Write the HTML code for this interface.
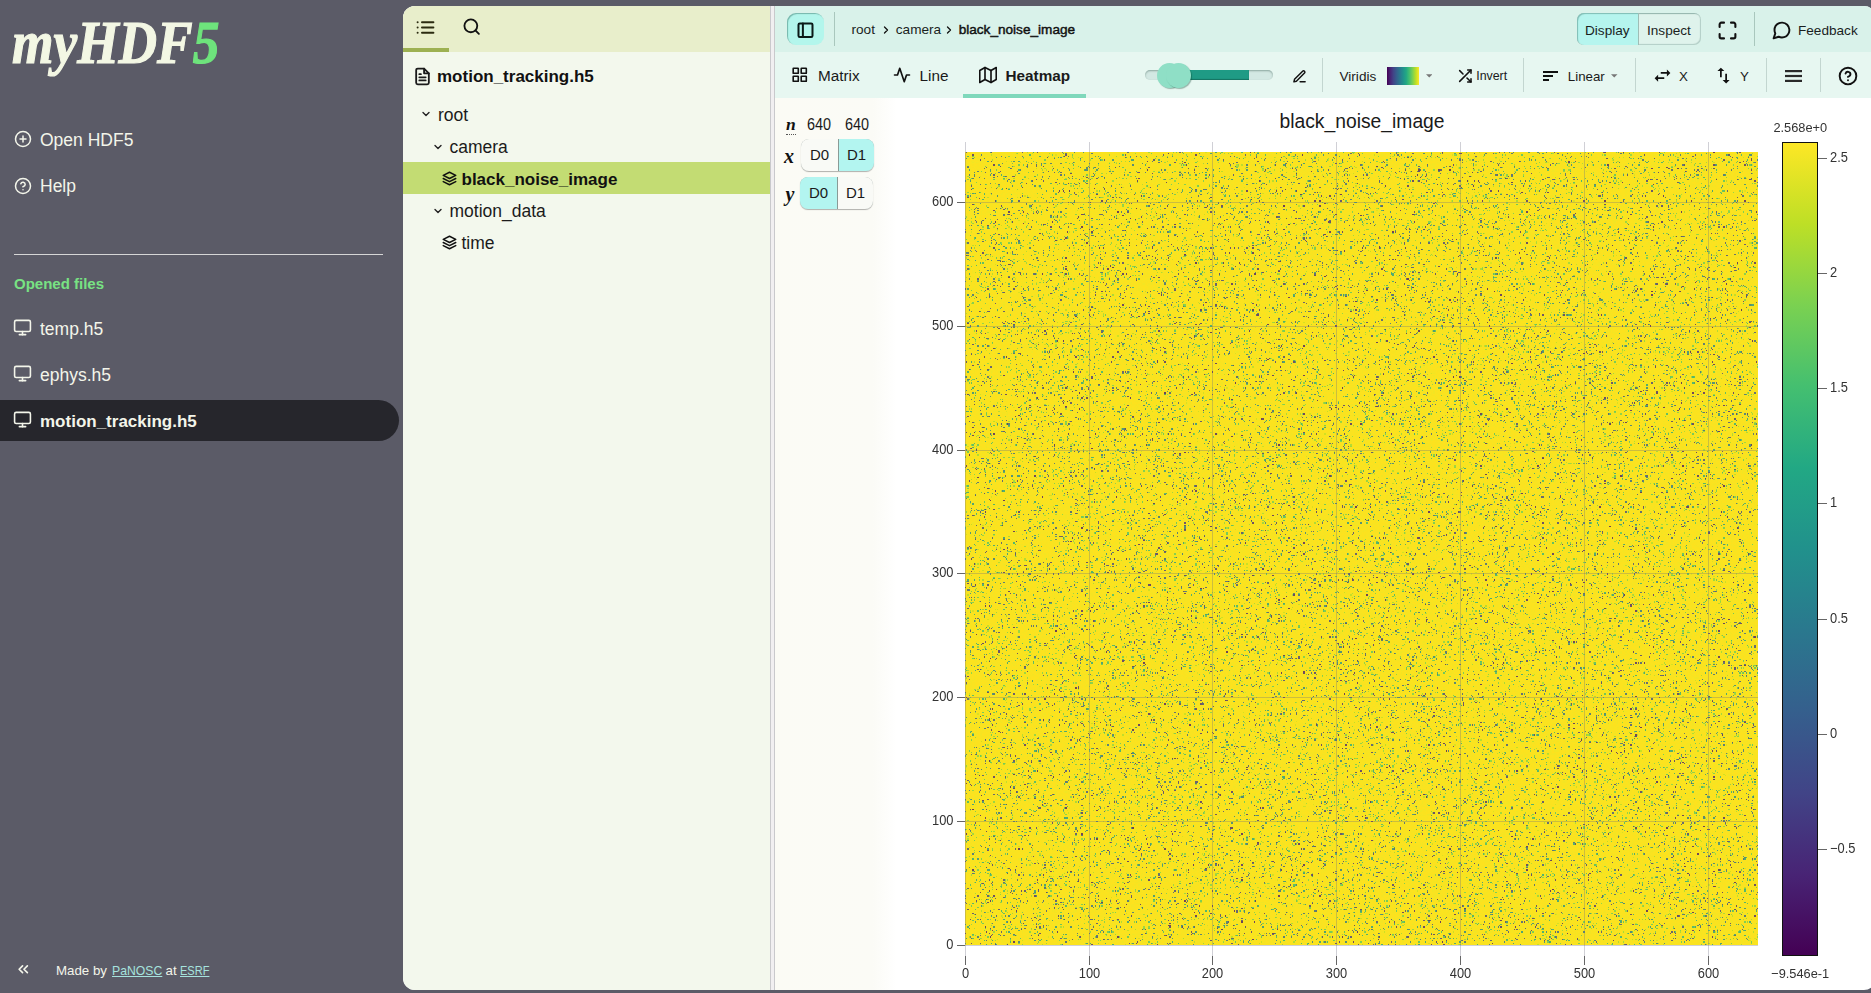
<!DOCTYPE html>
<html><head><meta charset="utf-8">
<style>
*{box-sizing:border-box;margin:0;padding:0}
html,body{width:1871px;height:993px;overflow:hidden}
body{background:#5b5b67;font-family:"Liberation Sans",sans-serif;position:relative;color:#1b1b1b}
.a{position:absolute;white-space:nowrap;line-height:1}
svg.a{display:block}
.fi{fill:none;stroke:currentColor;stroke-width:2;stroke-linecap:round;stroke-linejoin:round}
.mi{fill:currentColor}
.b{font-weight:bold}
/* sidebar */
#logo{left:12px;top:11px;font-family:"Liberation Serif",serif;font-weight:bold;font-style:italic;font-size:62px;color:#f3f7e4;letter-spacing:0px;transform-origin:0 0;transform:scaleX(0.86);-webkit-text-stroke:1.2px #f3f7e4}
#logo span{-webkit-text-stroke:1.2px #6ee37c}
#logo span{color:#6ee37c}
.side{color:#f3f5ea;font-size:17.5px}
#sep{left:14px;top:254px;width:369px;height:1px;background:#d6d6d6}
#opened{left:14px;top:276px;font-size:15px;font-weight:bold;color:#78e283}
#pill{left:0;top:400px;width:399px;height:41px;background:#26262c;border-radius:0 21px 21px 0}
.foot{font-size:13.3px;color:#f3f5ea;transform-origin:0 0}
.lk{color:#a6e3de;text-decoration:underline;text-underline-offset:1px}
/* panel backgrounds */
#panel{left:403px;top:6px;width:1473px;height:984px;background:#fff;border-radius:12px;overflow:hidden}
#tree{left:0;top:0;width:367px;height:984px;background:#f3f8ed}
#treehead{left:0;top:0;width:367px;height:46px;background:#e8eecb}
#tabline{left:0;top:42px;width:46px;height:4px;background:#9db152}
#selrow{left:0;top:156px;width:367px;height:32px;background:#c3dc73}
#splitter{left:367px;top:0;width:5px;height:984px;background:#f1eff1;border-left:1px solid #c9c9cc;border-right:1px solid #c9c9cc}
#bar{left:372px;top:0;width:1108px;height:46px;background:#d9f2ea}
#tool{left:372px;top:46px;width:1108px;height:46px;background:#e7f7f1}
#dims{left:372px;top:92px;width:122px;height:892px;background:linear-gradient(to right,#fbfbf5 0,#fbfbf6 98px,#fff 122px)}
.tt{font-size:17.5px;color:#1b1b1b}
.tb{font-size:17px;font-weight:bold;color:#111}
.bc{font-size:13.6px;color:#1a1f1e}
.tl{font-size:15.3px;color:#1a1a1a}
.sepv{top:58px;width:1px;height:34px;background:#c3d6d0}
.sm{color:#1a1a1a}
.dm{font-size:16px;color:#1a1a1a;transform-origin:0 0;transform:scaleX(.9)}
.grp{display:flex;height:32px;border-radius:8px;overflow:hidden;box-shadow:inset 0 0 0 1px #a4aeab, 0 1px 1px rgba(0,0,0,.3)}
.seg{height:32px;line-height:32px;text-align:center;font-size:15px;color:#1a1a1a;background:#f9faf6}
.seg.on{background:#b3f5f0}
.seg+.seg{border-left:1px solid #8a9a96}
.chev{color:#222;stroke-width:2.8}
</style></head><body>

<!-- SIDEBAR -->
<div id="logo" class="a">myHDF<span>5</span></div>

<svg class="a fi" style="left:14px;top:130.2px;color:#f3f5ea" width="18" height="18" viewBox="0 0 24 24"><circle cx="12" cy="12" r="10"/><line x1="12" y1="8" x2="12" y2="16"/><line x1="8" y1="12" x2="16" y2="12"/></svg>
<div class="a side" style="left:40px;top:131.5px">Open HDF5</div>
<svg class="a fi" style="left:14px;top:176.5px;color:#f3f5ea" width="18" height="18" viewBox="0 0 24 24"><circle cx="12" cy="12" r="10"/><path d="M9.09 9a3 3 0 0 1 5.83 1c0 2-3 3-3 3"/><line x1="12" y1="17" x2="12.01" y2="17"/></svg>
<div class="a side" style="left:40px;top:178px">Help</div>

<div id="sep" class="a"></div>
<div id="opened" class="a">Opened files</div>

<div id="pill" class="a"></div>
<svg class="a fi" style="left:13px;top:318px;color:#f3f5ea" width="19" height="19" viewBox="0 0 24 24"><rect x="2" y="3" width="20" height="14" rx="2" ry="2"/><line x1="8" y1="21" x2="16" y2="21"/><line x1="12" y1="17" x2="12" y2="21"/></svg>
<div class="a side" style="left:40px;top:321px">temp.h5</div>
<svg class="a fi" style="left:13px;top:364px;color:#f3f5ea" width="19" height="19" viewBox="0 0 24 24"><rect x="2" y="3" width="20" height="14" rx="2" ry="2"/><line x1="8" y1="21" x2="16" y2="21"/><line x1="12" y1="17" x2="12" y2="21"/></svg>
<div class="a side" style="left:40px;top:367px">ephys.h5</div>
<svg class="a fi" style="left:13px;top:410px;color:#f3f5ea" width="19" height="19" viewBox="0 0 24 24"><rect x="2" y="3" width="20" height="14" rx="2" ry="2"/><line x1="8" y1="21" x2="16" y2="21"/><line x1="12" y1="17" x2="12" y2="21"/></svg>
<div class="a side b" style="left:40px;top:412.5px;font-size:17px">motion_tracking.h5</div>

<svg class="a fi" style="left:14.5px;top:961px;color:#f3f5ea;stroke-width:2.4" width="16.5" height="16.5" viewBox="0 0 24 24"><polyline points="11 17 6 12 11 7"/><polyline points="18 17 13 12 18 7"/></svg>
<div class="a foot" style="left:56px;top:964px">Made by</div>
<div class="a foot lk" style="left:112px;top:964px;transform:scaleX(.92)">PaNOSC</div>
<div class="a foot" style="left:165.5px;top:964px">at</div>
<div class="a foot lk" style="left:179.8px;top:964px;transform:scaleX(.83)">ESRF</div>

<!-- MAIN PANEL BACKGROUNDS -->
<div id="panel" class="a">
 <div id="tree" class="a"></div>
 <div id="treehead" class="a"></div>
 <div id="tabline" class="a"></div>
 <div id="selrow" class="a"></div>
 <div id="splitter" class="a"></div>
 <div id="bar" class="a"></div>
 <div id="tool" class="a"></div>
 <div id="dims" class="a"></div>
</div>

<!-- TREE -->
<svg class="a fi" style="left:415px;top:16.5px;color:#2b2b10;stroke-width:2.3" width="21" height="21" viewBox="0 0 24 24"><line x1="8" y1="6" x2="21" y2="6"/><line x1="8" y1="12" x2="21" y2="12"/><line x1="8" y1="18" x2="21" y2="18"/><line x1="3" y1="6" x2="3.01" y2="6"/><line x1="3" y1="12" x2="3.01" y2="12"/><line x1="3" y1="18" x2="3.01" y2="18"/></svg>
<svg class="a fi" style="left:462.2px;top:17.3px;color:#111;stroke-width:2.3" width="19.3" height="19.3" viewBox="0 0 24 24"><circle cx="11" cy="11" r="8"/><line x1="21" y1="21" x2="16.65" y2="16.65"/></svg>

<svg class="a fi" style="left:413px;top:66.5px;color:#1a1a1a;stroke-width:2.3" width="19" height="19" viewBox="0 0 24 24"><path d="M14 2H6a2 2 0 0 0-2 2v16a2 2 0 0 0 2 2h12a2 2 0 0 0 2-2V8z"/><polyline points="14 2 14 8 20 8"/><line x1="16" y1="13" x2="8" y2="13"/><line x1="16" y1="17" x2="8" y2="17"/><polyline points="10 9 9 9 8 9"/></svg>
<div class="a tb" style="left:437px;top:68px">motion_tracking.h5</div>

<svg class="a fi chev" style="left:420px;top:108px" width="12" height="12" viewBox="0 0 24 24"><polyline points="6 9 12 15 18 9"/></svg>
<div class="a tt" style="left:438px;top:107px">root</div>
<svg class="a fi chev" style="left:432px;top:141px" width="12" height="12" viewBox="0 0 24 24"><polyline points="6 9 12 15 18 9"/></svg>
<div class="a tt" style="left:449.5px;top:139px">camera</div>
<svg class="a fi" style="left:442.3px;top:171px;color:#111;stroke-width:2.4" width="15" height="15" viewBox="0 0 24 24"><polygon points="12 2 2 7 12 12 22 7 12 2"/><polyline points="2 17 12 22 22 17"/><polyline points="2 12 12 17 22 12"/></svg>
<div class="a tb" style="left:461.5px;top:171px">black_noise_image</div>
<svg class="a fi chev" style="left:432px;top:205px" width="12" height="12" viewBox="0 0 24 24"><polyline points="6 9 12 15 18 9"/></svg>
<div class="a tt" style="left:449.5px;top:203px">motion_data</div>
<svg class="a fi" style="left:442.3px;top:235px;color:#111;stroke-width:2.4" width="15" height="15" viewBox="0 0 24 24"><polygon points="12 2 2 7 12 12 22 7 12 2"/><polyline points="2 17 12 22 22 17"/><polyline points="2 12 12 17 22 12"/></svg>
<div class="a tt" style="left:461.5px;top:235px">time</div>

<!--VIS-->
<!-- header bar -->
<div class="a" style="left:787px;top:13px;width:37px;height:32px;border-radius:9px;background:#b3f6ec;box-shadow:inset 1px 1px 1px rgba(0,60,50,.35)"></div>
<svg class="a fi" style="left:794.8px;top:19.5px;color:#0b1a18;stroke-width:2.3" width="21" height="21" viewBox="0 0 24 24"><rect x="4" y="4" width="16" height="15.5" rx="1.5" ry="1.5"/><line x1="9" y1="4" x2="9" y2="19.5"/></svg>
<div class="a" style="left:834px;top:12px;width:1px;height:34px;background:#a9c7bd"></div>
<div class="a bc" style="left:851.5px;top:22.5px">root</div>
<svg class="a fi" style="left:880px;top:23.5px;color:#111;stroke-width:2.6" width="12" height="12" viewBox="0 0 24 24"><polyline points="9 18 15 12 9 6"/></svg>
<div class="a bc" style="left:895.8px;top:22.5px">camera</div>
<svg class="a fi" style="left:943px;top:23.5px;color:#111;stroke-width:2.6" width="12" height="12" viewBox="0 0 24 24"><polyline points="9 18 15 12 9 6"/></svg>
<div class="a bc" style="left:958.7px;top:22.6px;color:#111;-webkit-text-stroke:0.45px #111">black_noise_image</div>

<div class="a" style="left:1577px;top:13px;width:124px;height:32px;border-radius:7px;background:#dff3ec;box-shadow:inset 1px 1px 1px rgba(0,60,50,.35),inset -1px -1px 1px rgba(0,60,50,.2)"></div>
<div class="a" style="left:1577px;top:13px;width:62px;height:32px;border-radius:7px 0 0 7px;background:#b5f5ee;box-shadow:inset 1px 1px 1px rgba(0,60,50,.3)"></div>
<div class="a" style="left:1638px;top:13px;width:1px;height:32px;background:#9fbdb5"></div>
<div class="a bc" style="left:1585px;top:24px">Display</div>
<div class="a bc" style="left:1647px;top:24px">Inspect</div>
<svg class="a fi" style="left:1717px;top:20px;color:#111;stroke-width:2.4" width="21" height="21" viewBox="0 0 24 24"><path d="M8 3H5a2 2 0 0 0-2 2v3m18 0V5a2 2 0 0 0-2-2h-3m0 18h3a2 2 0 0 0 2-2v-3M3 16v3a2 2 0 0 0 2 2h3"/></svg>
<div class="a" style="left:1754px;top:12px;width:1px;height:34px;background:#a9c7bd"></div>
<svg class="a fi" style="left:1771px;top:20px;color:#111;stroke-width:2.2" width="21" height="21" viewBox="0 0 24 24"><path d="M21 11.5a8.38 8.38 0 0 1-.9 3.8 8.5 8.5 0 0 1-7.6 4.7 8.38 8.38 0 0 1-3.8-.9L3 21l1.9-5.7a8.38 8.38 0 0 1-.9-3.8 8.5 8.5 0 0 1 4.7-7.6 8.38 8.38 0 0 1 3.8-.9h.5a8.48 8.48 0 0 1 8 8v.5z"/></svg>
<div class="a bc" style="left:1798px;top:24px">Feedback</div>

<!-- toolbar -->
<svg class="a fi" style="left:790.9px;top:66.1px;color:#111;stroke-width:2.2" width="17.5" height="17.5" viewBox="0 0 24 24"><rect x="3" y="3" width="7" height="7" rx=".5"/><rect x="14" y="3" width="7" height="7" rx=".5"/><rect x="14" y="14" width="7" height="7" rx=".5"/><rect x="3" y="14" width="7" height="7" rx=".5"/></svg>
<div class="a tl" style="left:818px;top:68px">Matrix</div>
<svg class="a fi" style="left:893px;top:66px;color:#111;stroke-width:2.2" width="18" height="18" viewBox="0 0 24 24"><polyline points="22 12 18 12 15 21 9 3 6 12 2 12"/></svg>
<div class="a tl" style="left:919.5px;top:68px">Line</div>
<svg class="a fi" style="left:979px;top:65.6px;color:#111;stroke-width:2.2" width="18" height="18" viewBox="0 0 24 24"><polygon points="1 6 1 22 8 18 16 22 23 18 23 2 16 6 8 2 1 6"/><line x1="8" y1="2" x2="8" y2="18"/><line x1="16" y1="6" x2="16" y2="22"/></svg>
<div class="a tl b" style="left:1005.5px;top:68px">Heatmap</div>
<div class="a" style="left:963px;top:94px;width:123px;height:4px;background:#7fd8bb"></div>


<!-- toolbar right -->
<div class="a" style="left:1145px;top:70px;width:128px;height:10px;border-radius:5px;background:#d3e8e3;box-shadow:inset 0 1px 2px rgba(0,40,30,.35)"></div>
<div class="a" style="left:1170px;top:70px;width:79px;height:10px;background:#1f9b85;box-shadow:inset 0 -1px 1px rgba(0,40,30,.35)"></div>
<div class="a" style="left:1157px;top:63px;width:25px;height:25px;border-radius:50%;background:#8fdfc6;box-shadow:1px 1px 1px rgba(0,60,40,.35)"></div>
<div class="a" style="left:1166px;top:63px;width:25px;height:25px;border-radius:50%;background:#8fdfc6;box-shadow:1px 1px 1px rgba(0,60,40,.35)"></div>
<svg class="a fi" style="left:1291.8px;top:68.5px;color:#111;stroke-width:2.3" width="15" height="15" viewBox="0 0 24 24"><path d="M13 20.5h8"/><path d="M17 3.5a2.121 2.121 0 0 1 3 3L7 19.5l-4 1 1-4L17 3.5z"/></svg>
<div class="a sepv" style="left:1322px"></div>
<div class="a sm" style="left:1339.5px;top:69.5px;font-size:13.6px">Viridis</div>
<div class="a" style="left:1387px;top:67px;width:32px;height:18px;background:linear-gradient(to right,#440154 0%,#482475 10%,#414487 20%,#355f8d 30%,#2a788e 40%,#21918c 50%,#22a884 60%,#44bf70 70%,#7ad151 80%,#bddf26 90%,#fde725 100%)"></div>
<svg class="a" style="left:1425.5px;top:74.3px" width="6.5" height="3.5" viewBox="0 0 8 4"><polygon points="0,0 8,0 4,4" fill="#777"/></svg>
<svg class="a fi" style="left:1456.5px;top:67.5px;color:#111;stroke-width:2.3" width="16" height="16" viewBox="0 0 24 24"><polyline points="16 3 21 3 21 8"/><line x1="4" y1="20" x2="21" y2="3"/><polyline points="21 16 21 21 16 21"/><line x1="15" y1="15" x2="21" y2="21"/><line x1="4" y1="4" x2="9" y2="9"/></svg>
<div class="a sm" style="left:1476.2px;top:70px;font-size:12.4px">Invert</div>
<div class="a sepv" style="left:1523px"></div>
<svg class="a" style="left:1543px;top:71px;color:#111" width="16" height="10" viewBox="0 0 16 10"><rect x="0" y="0" width="15" height="2" fill="#111"/><rect x="0" y="4" width="10" height="2" fill="#111"/><rect x="0" y="8" width="6" height="2" fill="#111"/></svg>
<div class="a sm" style="left:1567.8px;top:69.5px;font-size:13.3px">Linear</div>
<svg class="a" style="left:1611.3px;top:74.3px" width="6.5" height="3.5" viewBox="0 0 8 4"><polygon points="0,0 8,0 4,4" fill="#777"/></svg>
<div class="a sepv" style="left:1635px"></div>
<svg class="a mi" style="left:1652px;top:65px;color:#111" width="21" height="21" viewBox="0 0 24 24"><path d="M6.99 11L3 15l3.99 4v-3H14v-2H6.99v-3zM21 9l-3.99-4v3H10v2h7.01v3L21 9z"/></svg>
<div class="a sm" style="left:1679px;top:69.5px;font-size:13.3px">X</div>
<svg class="a mi" style="left:1713px;top:65px;color:#111" width="21" height="21" viewBox="0 0 24 24"><path d="M16 17.01V10h-2v7.01h-3L15 21l4-3.99h-3zM9 3L5 6.99h3V14h2V6.99h3L9 3z"/></svg>
<div class="a sm" style="left:1740px;top:69.5px;font-size:13.3px">Y</div>
<div class="a sepv" style="left:1766px"></div>
<svg class="a" style="left:1785px;top:70px" width="17" height="12" viewBox="0 0 17 12"><rect x="0" y="0" width="17" height="2.2" fill="#2a2a2a"/><rect x="0" y="4.9" width="17" height="2.2" fill="#2a2a2a"/><rect x="0" y="9.8" width="17" height="2.2" fill="#2a2a2a"/></svg>
<div class="a sepv" style="left:1820px"></div>
<svg class="a fi" style="left:1837.6px;top:65.9px;color:#111;stroke-width:2.3" width="20" height="20" viewBox="0 0 24 24"><circle cx="12" cy="12" r="10"/><path d="M9.09 9a3 3 0 0 1 5.83 1c0 2-3 3-3 3"/><line x1="12" y1="17" x2="12.01" y2="17"/></svg>

<!-- dimension mapper -->
<div class="a" style="left:786px;top:116px;font-family:'Liberation Serif',serif;font-style:italic;font-weight:bold;font-size:17.5px;color:#111">n</div>
<div class="a" style="left:786px;top:134px;width:10px;border-top:1px dotted #555"></div>
<div class="a dm" style="left:807px;top:116.5px">640</div>
<div class="a dm" style="left:844.5px;top:116.5px">640</div>
<div class="a" style="left:784px;top:146px;font-family:'Liberation Serif',serif;font-style:italic;font-weight:bold;font-size:20px;color:#111">x</div>
<div class="a grp" style="left:801px;top:139px"><div class="seg" style="width:37px">D0</div><div class="seg on" style="width:36px">D1</div></div>
<div class="a" style="left:785.5px;top:184px;font-family:'Liberation Serif',serif;font-style:italic;font-weight:bold;font-size:20px;color:#111">y</div>
<div class="a grp" style="left:800px;top:177px"><div class="seg on" style="width:37px">D0</div><div class="seg" style="width:36px">D1</div></div>

<!-- heatmap -->
<div class="a" style="left:1279.5px;top:111.5px;font-size:19.3px;color:#1a1a1a">black_noise_image</div>
<canvas id="hm" class="a" width="640" height="640" style="left:965px;top:152px;width:793px;height:793px;image-rendering:pixelated;background:#ecdc27"></canvas>
<svg class="a" style="left:0;top:0;pointer-events:none" width="1871" height="993">
 <g stroke="#6e6e80" stroke-opacity=".32" stroke-width="1">
  <line x1="965.5" y1="142" x2="965.5" y2="956"/>
  <line x1="1089.5" y1="142" x2="1089.5" y2="956"/>
  <line x1="1212.5" y1="142" x2="1212.5" y2="956"/>
  <line x1="1336.5" y1="142" x2="1336.5" y2="956"/>
  <line x1="1460.5" y1="142" x2="1460.5" y2="956"/>
  <line x1="1584.5" y1="142" x2="1584.5" y2="956"/>
  <line x1="1708.5" y1="142" x2="1708.5" y2="956"/>
  <line x1="965" y1="945.5" x2="1758" y2="945.5"/>
  <line x1="965" y1="821.5" x2="1758" y2="821.5"/>
  <line x1="965" y1="697.5" x2="1758" y2="697.5"/>
  <line x1="965" y1="573.5" x2="1758" y2="573.5"/>
  <line x1="965" y1="450.5" x2="1758" y2="450.5"/>
  <line x1="965" y1="326.5" x2="1758" y2="326.5"/>
  <line x1="965" y1="202.5" x2="1758" y2="202.5"/>
 </g>
 <g stroke="#666" stroke-width="1">
  <line x1="965.5" y1="956" x2="965.5" y2="965"/>
  <line x1="1089.5" y1="956" x2="1089.5" y2="965"/>
  <line x1="1212.5" y1="956" x2="1212.5" y2="965"/>
  <line x1="1336.5" y1="956" x2="1336.5" y2="965"/>
  <line x1="1460.5" y1="956" x2="1460.5" y2="965"/>
  <line x1="1584.5" y1="956" x2="1584.5" y2="965"/>
  <line x1="1708.5" y1="956" x2="1708.5" y2="965"/>
  <line x1="957" y1="945.5" x2="965" y2="945.5"/>
  <line x1="957" y1="821.5" x2="965" y2="821.5"/>
  <line x1="957" y1="697.5" x2="965" y2="697.5"/>
  <line x1="957" y1="573.5" x2="965" y2="573.5"/>
  <line x1="957" y1="450.5" x2="965" y2="450.5"/>
  <line x1="957" y1="326.5" x2="965" y2="326.5"/>
  <line x1="957" y1="202.5" x2="965" y2="202.5"/>
  <line x1="1818" y1="158.5" x2="1827" y2="158.5"/>
  <line x1="1818" y1="273.5" x2="1827" y2="273.5"/>
  <line x1="1818" y1="388.5" x2="1827" y2="388.5"/>
  <line x1="1818" y1="503.5" x2="1827" y2="503.5"/>
  <line x1="1818" y1="619.5" x2="1827" y2="619.5"/>
  <line x1="1818" y1="734.5" x2="1827" y2="734.5"/>
  <line x1="1818" y1="849.5" x2="1827" y2="849.5"/>
 </g>
 <g font-family="Liberation Sans" font-size="14" fill="#333">
  <text text-anchor="middle" transform="translate(965.5 978) scale(0.92 1)">0</text>
  <text text-anchor="middle" transform="translate(1089.5 978) scale(0.92 1)">100</text>
  <text text-anchor="middle" transform="translate(1212.5 978) scale(0.92 1)">200</text>
  <text text-anchor="middle" transform="translate(1336.5 978) scale(0.92 1)">300</text>
  <text text-anchor="middle" transform="translate(1460.5 978) scale(0.92 1)">400</text>
  <text text-anchor="middle" transform="translate(1584.5 978) scale(0.92 1)">500</text>
  <text text-anchor="middle" transform="translate(1708.5 978) scale(0.92 1)">600</text>
  <text text-anchor="end" transform="translate(953.5 949) scale(0.92 1)">0</text>
  <text text-anchor="end" transform="translate(953.5 825) scale(0.92 1)">100</text>
  <text text-anchor="end" transform="translate(953.5 701) scale(0.92 1)">200</text>
  <text text-anchor="end" transform="translate(953.5 577) scale(0.92 1)">300</text>
  <text text-anchor="end" transform="translate(953.5 454) scale(0.92 1)">400</text>
  <text text-anchor="end" transform="translate(953.5 330) scale(0.92 1)">500</text>
  <text text-anchor="end" transform="translate(953.5 206) scale(0.92 1)">600</text>
  <text text-anchor="start" transform="translate(1830 162) scale(0.92 1)">2.5</text>
  <text text-anchor="start" transform="translate(1830 277) scale(0.92 1)">2</text>
  <text text-anchor="start" transform="translate(1830 392) scale(0.92 1)">1.5</text>
  <text text-anchor="start" transform="translate(1830 507) scale(0.92 1)">1</text>
  <text text-anchor="start" transform="translate(1830 623) scale(0.92 1)">0.5</text>
  <text text-anchor="start" transform="translate(1830 738) scale(0.92 1)">0</text>
  <text text-anchor="start" transform="translate(1830 853) scale(0.92 1)">−0.5</text>
  <text text-anchor="middle" font-size="13.5" transform="translate(1800.3 132) scale(.95 1)">2.568e+0</text><text text-anchor="middle" font-size="13.5" transform="translate(1800.2 978) scale(.95 1)">−9.546e-1</text>
 </g>
</svg>
<div class="a" style="left:1782px;top:142px;width:36px;height:814px;border:1.5px solid #111;background:linear-gradient(to top,#440154 0%,#482475 10%,#414487 20%,#355f8d 30%,#2a788e 40%,#21918c 50%,#22a884 60%,#44bf70 70%,#7ad151 80%,#bddf26 90%,#fde725 100%)"></div>
<script>
(function(){
var c=document.getElementById('hm');if(!c||!c.getContext)return;
var ctx=c.getContext('2d');var W=640,H=640;var im=ctx.createImageData(W,H);var d=im.data;
var st=[[68,1,84],[72,36,117],[65,68,135],[53,95,141],[42,120,142],[33,145,140],[34,168,132],[68,191,112],[122,209,81],[189,223,38],[253,231,37]];
function vir(t){t=Math.max(0,Math.min(1,t))*10;var i=Math.floor(t);if(i>=10)return st[10];var f=t-i,a=st[i],b=st[i+1];return [a[0]+(b[0]-a[0])*f,a[1]+(b[1]-a[1])*f,a[2]+(b[2]-a[2])*f];}
var s=123456789;function rnd(){s^=s<<13;s^=s>>>17;s^=s<<5;return ((s>>>0)%100000)/100000;}
for(var k=0;k<W*H;k++){var r=rnd(),col;
 if(r<0.08){var t=0.05+rnd()*0.8;var v=vir(t);var m=0.22;col=[v[0]*(1-m)+253*m,v[1]*(1-m)+226*m,v[2]*(1-m)+30*m];}
 else if(r<0.1){var v=vir(0.72+rnd()*0.22);col=[v[0]*0.8+253*0.2,v[1]*0.8+226*0.2,v[2]*0.8+30*0.2];}
 else{var e=rnd()*rnd()*14;col=[253-e,226+e*0.3,30+e*0.5];}
 d[k*4]=col[0];d[k*4+1]=col[1];d[k*4+2]=col[2];d[k*4+3]=255;}
ctx.putImageData(im,0,0);
})();
</script>

</body></html>
